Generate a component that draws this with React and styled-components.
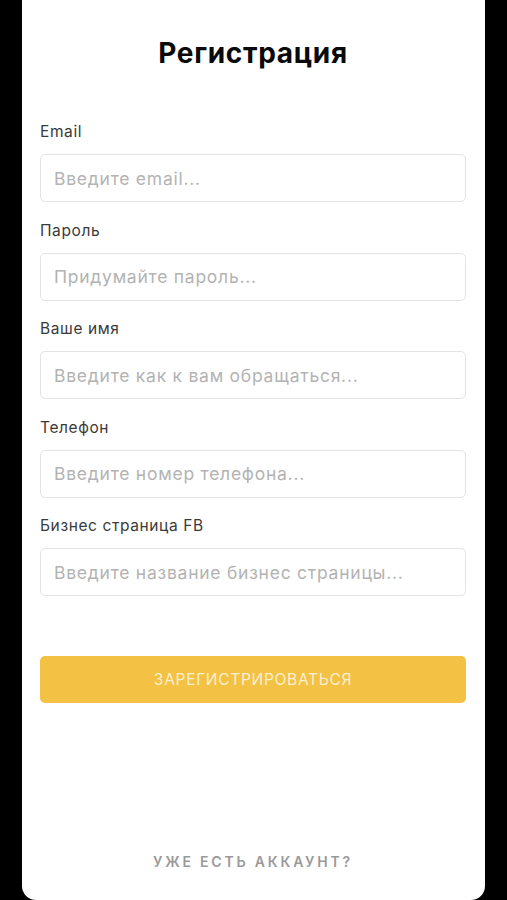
import styled, { createGlobalStyle } from 'styled-components'

const GlobalStyle = createGlobalStyle`
  html, body {
    margin: 0;
    padding: 0;
    background: #000;
  }
  body {
    font-family: Inter, "Noto Sans", "Liberation Sans", sans-serif;
  }
  * {
    box-sizing: border-box;
  }
`

const fields = [
  { label: 'Email', placeholder: 'Введите email...' },
  { label: 'Пароль', placeholder: 'Придумайте пароль...' },
  { label: 'Ваше имя', placeholder: 'Введите как к вам обращаться...' },
  { label: 'Телефон', placeholder: 'Введите номер телефона...' },
  { label: 'Бизнес страница FB', placeholder: 'Введите название бизнес страницы...' },
]

export default function App() {
  return (
    <>
      <GlobalStyle />
      <Screen>
        <Card>
          <Title>Регистрация</Title>
          <Form>
            {fields.map((f) => (
              <Field key={f.label}>
                <Label>{f.label}</Label>
                <Input placeholder={f.placeholder} />
              </Field>
            ))}
          </Form>
          <SubmitButton>Зарегистрироваться</SubmitButton>
          <LoginLink>Уже есть аккаунт?</LoginLink>
        </Card>
      </Screen>
    </>
  )
}

const Screen = styled.div`
  display: flex;
  justify-content: center;
  width: 507px;
  height: 900px;
  background: #000;
`

const Card = styled.div`
  width: 463px;
  height: 900px;
  background: #fff;
  border-radius: 0 0 14px 14px;
  padding: 0 19px 28px 18px;
  display: flex;
  flex-direction: column;
`

const Title = styled.h1`
  margin: 36px 0 0;
  text-align: center;
  font-size: 28px;
  line-height: 34px;
  font-weight: 700;
  letter-spacing: 0.7px;
  color: #0a0a0a;
`

const Form = styled.div`
  display: flex;
  flex-direction: column;
  gap: 18.5px;
  margin-top: 52px;
`

const Field = styled.div`
  display: flex;
  flex-direction: column;
  gap: 12px;
`

const Label = styled.label`
  font-size: 15.5px;
  line-height: 20px;
  letter-spacing: 0.6px;
  color: #3a3a3a;
`

const Input = styled.input`
  height: 48px;
  width: 100%;
  border: 1px solid #e3e3e3;
  border-radius: 5px;
  padding: 0 13px;
  font-family: inherit;
  font-size: 17.5px;
  letter-spacing: 0.75px;
  color: #333;
  background: #fff;
  outline: none;
  &::placeholder {
    color: #b3b3b3;
  }
`

const SubmitButton = styled.button`
  margin-top: 60px;
  height: 47px;
  width: 100%;
  border: none;
  border-radius: 5px;
  background: #f3c144;
  color: #fcefcf;
  font-family: inherit;
  font-size: 15.5px;
  text-transform: uppercase;
  letter-spacing: 0.7px;
  cursor: pointer;
`

const LoginLink = styled.a`
  margin-top: auto;
  text-align: center;
  font-size: 14px;
  line-height: 20px;
  font-weight: 600;
  letter-spacing: 2.8px;
  text-transform: uppercase;
  color: #9a9a9a;
  cursor: pointer;
`
